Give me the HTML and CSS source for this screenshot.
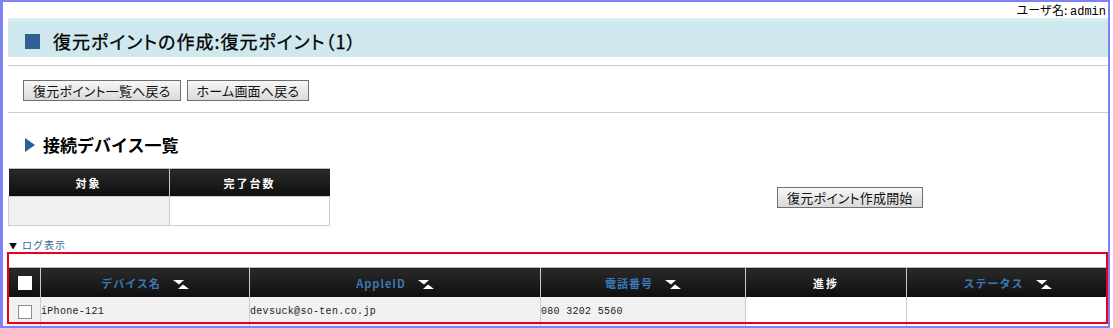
FILE: index.html
```html
<!Doctype html>
<html>
<head>
    <meta charset="UTF-8">
    <title>復元ポイントの作成</title>
    <link rel="stylesheet" href="styles.css">
</head>
<body>
<div class="frame">
    <div class="user">ユーザ名: <span class="mono">admin</span></div>
    <div class="band">
        <span class="square"></span>
        <h1>復元ポイントの作成:復元ポイント（1）</h1>
    </div>
    <div class="rule"></div>
    <div class="buttons">
        <button class="btn">復元ポイント一覧へ戻る</button>
        <button class="btn">ホーム画面へ戻る</button>
    </div>
    <div class="rule rule2"></div>
    <h2 class="heading"><span class="tri"></span>接続デバイス一覧</h2>
    <div class="summary">
        <table class="small">
            <tr><th>対象</th><th>完了台数</th></tr>
            <tr><td class="gray"></td><td></td></tr>
        </table>
        <button class="btn start">復元ポイント作成開始</button>
    </div>
    <a class="log" href="#"><span class="down">▼</span>ログ表示</a>
    <table class="devices">
        <tr>
            <th class="chk"><span class="box white"></span></th>
            <th class="w1"><a href="#">デバイス名</a><svg class="sort" width="16" height="9" viewBox="0 0 16 9"><polygon points="0,0 11,0 6,4.5" fill="#fff"/><polygon points="5,9 16,9 10,4.5" fill="#fff"/></svg></th>
            <th class="w2"><a href="#">AppleID</a><svg class="sort" width="16" height="9" viewBox="0 0 16 9"><polygon points="0,0 11,0 6,4.5" fill="#fff"/><polygon points="5,9 16,9 10,4.5" fill="#fff"/></svg></th>
            <th class="w3"><a href="#">電話番号</a><svg class="sort" width="16" height="9" viewBox="0 0 16 9"><polygon points="0,0 11,0 6,4.5" fill="#fff"/><polygon points="5,9 16,9 10,4.5" fill="#fff"/></svg></th>
            <th class="w4">進捗</th>
            <th class="w5"><a href="#">ステータス</a><svg class="sort" width="16" height="9" viewBox="0 0 16 9"><polygon points="0,0 11,0 6,4.5" fill="#fff"/><polygon points="5,9 16,9 10,4.5" fill="#fff"/></svg></th>
        </tr>
        <tr>
            <td class="chk gray"><span class="box"></span></td>
            <td class="gray data">iPhone-121</td>
            <td class="gray data">devsuck@so-ten.co.jp</td>
            <td class="gray data">080 3202 5560</td>
            <td></td>
            <td></td>
        </tr>
    </table>
    <div class="mark"></div>
</div>
</body>
</html>
```

FILE: styles.css
```css
body{
    margin: 0;
    font-family: "Noto Sans CJK JP", sans-serif;
    color: #000;
}
.frame{
    position: relative;
    width: 1105px;
    height: 324px;
    border: 2px solid #7f80f2;
    border-left-width: 3px;
    overflow: hidden;
    background: #fff;
}
.user{
    height: 16px;
    line-height: 16px;
    font-size: 12px;
    text-align: right;
    padding-right: 2px;
}
.mono{
    font-family: "Liberation Mono", monospace;
    font-size: 12px;
}
.band{
    margin-left: 5px;
    height: 39px;
    background: #cfe8ee;
    border-top: 3px solid #d9eef2;
    box-sizing: border-box;
    display: flex;
    align-items: center;
    padding-left: 17px;
    padding-top: 4px;
}
.square{
    width: 15px;height: 15px;
    background: #2f6196;
    margin-right: 13px;
}
.band h1{
    margin: 0;
    font-size: 18px;
    font-weight: normal;
    -webkit-text-stroke: 0.3px #000;
    font-feature-settings: "palt";
    letter-spacing: 1px;
}
.rule{
    margin-left: 5px;
    margin-top: 8px;
    border-top: 1px solid #cccccc;
}
.rule2{
    margin-top: 11px;
}
.buttons{
    margin-top: 14px;
    margin-left: 20px;
    display: flex;
    gap: 6px;
}
.btn{
    height: 21px;
    padding: 0 9px;
    font-family: "Noto Sans CJK JP", sans-serif;
    font-size: 13px;
    line-height: 19px;
    color: #111;
    background: linear-gradient(#f7f7f7, #dadada);
    border: 1px solid #6f6f6f;
    border-radius: 0;
    font-feature-settings: "palt";
    letter-spacing: 0.2px;
}
.heading{
    margin: 20px 0 0 22px;
    height: 24px;
    line-height: 24px;
    font-size: 17px;
    display: flex;
    align-items: center;
}
.tri{
    width: 0;height: 0;
    border-top: 7px solid transparent;
    border-bottom: 7px solid transparent;
    border-left: 10px solid #2b5f9c;
    margin-right: 8px;
}
.summary{
    margin-top: 11px;
    margin-left: 5px;
    display: flex;
    align-items: center;
}
table{
    border-collapse: collapse;
}
.small{
    width: 322px;
    table-layout: fixed;
}
.small th, .devices th{
    background: linear-gradient(#2a2a2a, #0e0e0e);
    color: #fff;
    font-size: 11px;
    letter-spacing: 2px;
    border-left: 1px solid #c8c8c8;
    border-top: 1px solid #bdbdbd;
    padding: 0;
}
.small th{
    height: 27px;
}
.small td{
    height: 28px;
    border: 1px solid #cccccc;
    padding: 0;
}
.small th:first-child, .devices th:first-child{
    border-left: none;
}
.gray{
    background: #f1f1f1;
}
.start{
    margin-left: 447px;
}
.log{
    display: block;
    margin: 12px 0 0 6px;
    height: 14px;
    line-height: 14px;
    font-size: 10px;
    color: #336699;
    text-decoration: none;
    letter-spacing: 1px;
}
.down{
    font-size: 8px;
    color: #000;
    margin-right: 4px;
}
.devices{
    margin-top: 15px;
    margin-left: 6px;
    width: 1099px;
    table-layout: fixed;
}
.devices th{
    height: 29px;
}
.devices th a{
    color: #3b78b5;
    text-decoration: none;
    letter-spacing: 1px;
}
.sort{
    margin-left: 12px;
    vertical-align: -1px;
}
.devices td{
    height: 29px;
    border-left: 1px solid #cccccc;
    border-bottom: 1px solid #cccccc;
    padding: 0;
}
.devices td:first-child{
    border-left: none;
}
.chk{width: 31px;}
.w1{width: 208px;}
.w2{width: 290px;}
.w3{width: 204px;}
.w4{width: 160px;}
.w5{width: auto;}
.box{
    display: block;
    width: 12px;height: 12px;
    margin-left: 9px;
    border: 1px solid #8c8c8c;
    background: #fff;
}
.box.white{
    border-color: #fff;
}
.data{
    font-family: "Liberation Mono", "DejaVu Sans Mono", monospace;
    font-size: 10px;
    padding-left: 4px;
    letter-spacing: 0.3px;
    color: #222;
}
.mark{
    position: absolute;
    left: 4px;
    top: 250px;
    width: 1097px;
    height: 68px;
    border: 2px solid #e8001e;
}
```
